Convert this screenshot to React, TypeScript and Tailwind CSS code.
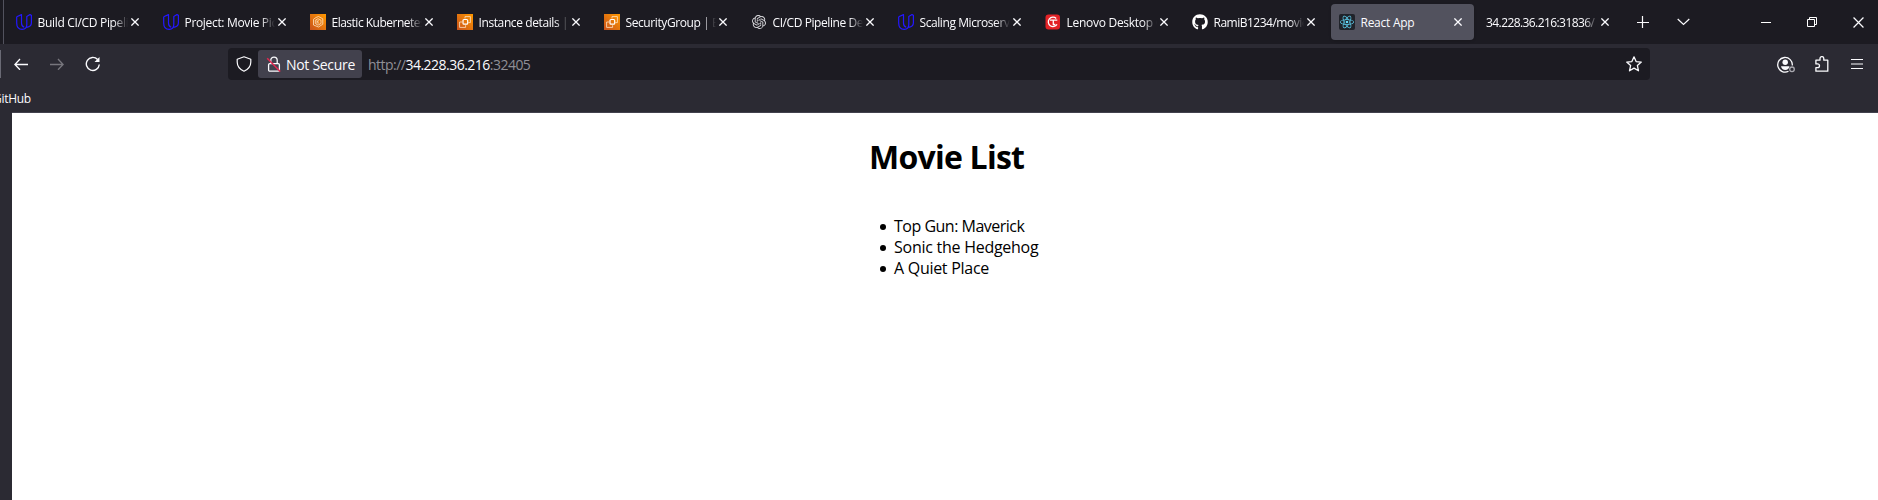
import type { ReactNode } from "react";
import { SiOpenai, SiReact } from "react-icons/si";
import { FaGithub } from "react-icons/fa";

function Udacity() {
  return (
    <svg width="16" height="16" viewBox="0 0 16 16" fill="none" stroke="#2418ff" strokeWidth="1.2" strokeLinejoin="round">
      <path d="M.7 2.700 5.500.6v8.400c0 2.200.8 3.700 2.800 4.300" />
      <path d="M.7 2.700v6.300c0 4 2.300 6.400 5.500 6.400 2.800 0 4.600-1.900 4.600-4.800V2.500L14 .6l1.400.7v7.500c0 2.600-1.800 4.200-4.700 4.500" />
    </svg>
  );
}

function Aws({ eks }: { eks?: boolean }) {
  return (
    <svg width="16" height="16" viewBox="0 0 16 16" fill="none" stroke="#ffe3c4" strokeWidth=".8">
      <defs>
        <linearGradient id="aws" x1="0" y1="1" x2="1" y2="0">
          <stop stopColor="#c8511b" />
          <stop offset="1" stopColor="#f90" />
        </linearGradient>
      </defs>
      <path fill="url(#aws)" stroke="none" d="M0 0h16v16H0z" />
      {eks ? (
        <>
          <path d="M6 3.500 8.500 2.500l4.300 2.300v5.400L8.500 13 3.500 11V5.300z" />
          <path d="M8 4.700 11 6.200v3.300L8 11.200 5.300 9.500V6.200zM7 6.200v3.500M7.200 8l2-1.800M7.500 8l1.800 1.700" />
        </>
      ) : (
        <>
          <rect x="6" y="5.500" width="4.700" height="4.700" rx="1" stroke="#fff" strokeWidth="1.200" />
          <path d="M5 8H2.600v5.400h6v-2.200M8 4.500V2.600h5.400v6h-2.200" />
        </>
      )}
    </svg>
  );
}

function Lenovo() {
  return (
    <svg width="16" height="16" viewBox="0 0 16 16" fill="none" stroke="#fff">
      <rect x=".5" y=".5" width="14.500" height="15" rx="3" fill="#e32226" stroke="none" />
      <path strokeWidth="1.300" d="M11.200 4.400A4.700 4.700 0 1 0 12 10.300M5 6.200h7.300M8.300 6.200v4.300h2" />
    </svg>
  );
}

function ReactLogo() {
  return (
    <span className="flex size-4 items-center justify-center rounded-xs bg-[#20232a]">
      <SiReact size={14} color="#61dafb" />
    </span>
  );
}

function Cross({ size = 8 }: { size?: number }) {
  return (
    <svg width={size} height={size} viewBox="0 0 8 8" fill="none" stroke="#fbfbfe" strokeWidth={size > 8 ? 0.9 : 1.3}>
      <path d="m.4.4 7.200 7.200M7.600.4.4 7.600" />
    </svg>
  );
}

type TabItem = { title: string; icon?: ReactNode; active?: boolean; tracking: string };

const tabs: TabItem[] = [
  { title: "Build CI/CD Pipeline", icon: <Udacity />, tracking: "tracking-[-0.32px]" },
  { title: "Project: Movie Picture", icon: <Udacity />, tracking: "tracking-[-0.33px]" },
  { title: "Elastic Kubernetes", icon: <Aws eks />, tracking: "tracking-[-0.5px]" },
  { title: "Instance details | EC2", icon: <Aws />, tracking: "tracking-[-0.4px]" },
  { title: "SecurityGroup | EC2", icon: <Aws />, tracking: "tracking-[-0.4px]" },
  { title: "CI/CD Pipeline Deploy", icon: <SiOpenai size={14} color="#d8d8dc" className="mx-px" />, tracking: "tracking-[-0.42px]" },
  { title: "Scaling Microservices", icon: <Udacity />, tracking: "tracking-[-0.42px]" },
  { title: "Lenovo Desktop C", icon: <Lenovo />, tracking: "tracking-[-0.28px]" },
  { title: "RamiB1234/movie", icon: <FaGithub size={16} color="#fff" />, tracking: "tracking-[-0.5px]" },
  { title: "React App", icon: <ReactLogo />, active: true, tracking: "tracking-[-0.26px]" },
  { title: "34.228.36.216:31836/", tracking: "tracking-[-0.58px]" },
];

function Tab({ title, icon, active, tracking }: TabItem) {
  return (
    <div className={`flex h-9 w-[143px] shrink-0 items-center rounded pl-2 ${active ? "bg-[#52525e] shadow-sm" : ""}`}>
      {icon && <span className="mr-[5.5px] flex w-4 shrink-0">{icon}</span>}
      <span
        className={`min-w-0 flex-1 overflow-hidden pt-0.5 text-xs leading-5 whitespace-nowrap ${tracking} ${active ? "" : "[mask-image:linear-gradient(to_left,transparent,black_14px)]"}`}
      >
        {title}
      </span>
      <span className="mr-3 ml-[3px] flex shrink-0">
        <Cross />
      </span>
    </div>
  );
}

function TabBar() {
  return (
    <header className="flex h-11 items-center bg-[#1c1b22]">
      <div className="mr-1 ml-[3px] h-11 w-px bg-[#52525e]" />
      <div className="flex gap-1">
        {tabs.map((tab) => (
          <Tab key={tab.title} {...tab} />
        ))}
      </div>
      <svg className="ml-[16px]" width="12" height="12" viewBox="0 0 12 12" stroke="#fbfbfe" strokeWidth="1.200">
        <path d="M5.500 0v12M0 6.500h12" />
      </svg>
      <svg className="ml-7" width="13" height="8" viewBox="0 0 13 8" fill="none" stroke="#fbfbfe" strokeWidth="1.200">
        <path d="m.7 1 5.800 5.500L12.300 1" />
      </svg>
      <div className="mr-[14px] ml-auto flex items-center gap-9">
        <span className="h-px w-[10px] bg-white" />
        <svg width="10" height="10" viewBox="0 0 10 10" fill="none" stroke="#fff">
          <path d="M.5 2.500h7v7h-7zM2.500 2.500v-2h7v7h-2" />
        </svg>
        <Cross size={11} />
      </div>
    </header>
  );
}

function Toolbar() {
  return (
    <div className="flex h-10 items-center bg-[#2b2a33]">
      <div className="h-7 w-px bg-[#6a6a75]" />
      <nav className="ml-[13px] flex items-center gap-[21px]">
        <svg width="15" height="12" viewBox="0 0 15 12" fill="none" stroke="#fbfbfe" strokeWidth="1.300">
          <path d="M14 6.500H1M6 1 .9 6.500 6 11.800" />
        </svg>
        <svg width="15" height="12" viewBox="0 0 15 12" fill="none" stroke="#77767d" strokeWidth="1.300">
          <path d="M0 6.500h13M8 1l5.100 5.500L8 11.800" />
        </svg>
        <svg className="-ml-px" width="16" height="16" viewBox="0 0 16 16" fill="none" stroke="#fbfbfe" strokeWidth="1.400">
          <path d="M14.300 8.500A6.500 6.500 0 1 1 12.600 3.500" />
          <path d="M14.500 1v5H9.500z" fill="#fbfbfe" stroke="none" />
        </svg>
      </nav>
      <div className="ml-[127px] flex h-8 w-[1422px] items-center rounded bg-[#1c1b22] pr-2 pl-2">
        <svg width="16" height="16" viewBox="0 0 16 16" fill="none" stroke="#fbfbfe" strokeWidth="1.200">
          <path d="M8 .8 14.800 3.300v2.600c0 4.200-3 7.500-6.800 9.300-3.800-1.800-6.800-5.100-6.800-9.300V3.300z" strokeLinejoin="round" />
        </svg>
        <div className="ml-1.5 flex h-7 w-[104px] items-center rounded-[3px] bg-[#42414d] pl-2">
          <svg width="16" height="16" viewBox="0 0 16 16" fill="none" stroke="#fbfbfe" strokeWidth="1.300">
            <rect x="2.600" y="7.600" width="10.800" height="7.600" rx="1.200" />
            <path d="M4.800 7.600V4.300a3.200 3.200 0 0 1 6.400 0v3.300" />
            <path d="m1.200 2.200 13 13.300" stroke="#e22850" strokeWidth="1.500" />
          </svg>
          <span className="ml-1 pt-0.5 text-sm tracking-[-0.3px] whitespace-nowrap">Not Secure</span>
        </div>
        <div className="ml-1.5 pt-0.5 text-sm tracking-[-0.52px] text-[#8f8f96]">
          http://<span className="text-[#fbfbfe]">34.228.36.216</span>:32405
        </div>
        <svg className="ml-auto" width="16" height="16" viewBox="0 0 16 16" fill="none" stroke="#fbfbfe" strokeWidth="1.300" strokeLinejoin="round">
          <path d="m8 .8 2.100 4.800 5.200.5-3.900 3.500 1.100 5.200L8 12.100l-4.500 2.700 1.100-5.200L.7 6.100l5.200-.5z" />
        </svg>
      </div>
      <div className="mr-[15px] ml-auto flex items-center">
        <svg width="19" height="17" viewBox="0 0 19 17" fill="none" stroke="#fbfbfe" strokeWidth="1.300">
          <path d="M11.500 15.200A7.300 7.300 0 1 1 15.300 9.500" />
          <circle cx="8.200" cy="6.300" r="2.700" fill="#fbfbfe" stroke="none" />
          <path d="M4 10.300h8.500c-.3 2.400-2 3.700-4.200 3.700S4.300 12.700 4 10.300" fill="#fbfbfe" stroke="none" />
          <circle cx="15" cy="13.300" r="2.300" stroke="#aaa9b0" />
        </svg>
        <svg className="ml-[18px]" width="16" height="16" viewBox="0 0 16 16" fill="none" stroke="#fbfbfe" strokeWidth="1.300" strokeLinejoin="round">
          <path d="M6 4.200V2.500a1.900 1.900 0 0 1 3.800 0v1.700h4v11H1.900v-3.500h1.700a1.900 1.900 0 0 0 0-3.800H1.900V4.200z" />
        </svg>
        <svg className="ml-[21px]" width="12" height="12" viewBox="0 0 12 12" stroke="#fbfbfe">
          <path d="M0 1.500h12M0 6h12M0 10.500h12" />
        </svg>
      </div>
    </div>
  );
}

const movies = [
  { title: "Top Gun: Maverick", tracking: "tracking-[-0.5px]" },
  { title: "Sonic the Hedgehog", tracking: "tracking-[-0.26px]" },
  { title: "A Quiet Place", tracking: "tracking-[-0.28px]" },
];

export default function App() {
  return (
    <div className="flex h-[500px] w-[1878px] flex-col overflow-hidden bg-[#2b2a33] font-['Open_Sans','Noto_Sans',sans-serif] text-[#fbfbfe]">
      <TabBar />
      <Toolbar />
      <div className="flex h-7 items-center overflow-hidden pt-0.5 text-xs">
        <span className="-ml-[7px] tracking-[-0.3px]">GitHub</span>
      </div>
      <main className="ml-3 flex flex-1 flex-col border-t border-[#42414d] bg-white text-black">
        <div className="ml-[857px]">
          <h1 className="mt-[22px] text-[32px] leading-[43px] font-bold tracking-[-0.76px]">Movie List</h1>
          <ul className="mt-[38px] pl-[11px] text-base leading-[21px]">
            {movies.map(({ title, tracking }) => (
              <li key={title} className={`flex items-center ${tracking}`}>
                <span className="mr-2 size-1.5 rounded-full bg-black" />
                {title}
              </li>
            ))}
          </ul>
        </div>
      </main>
    </div>
  );
}
